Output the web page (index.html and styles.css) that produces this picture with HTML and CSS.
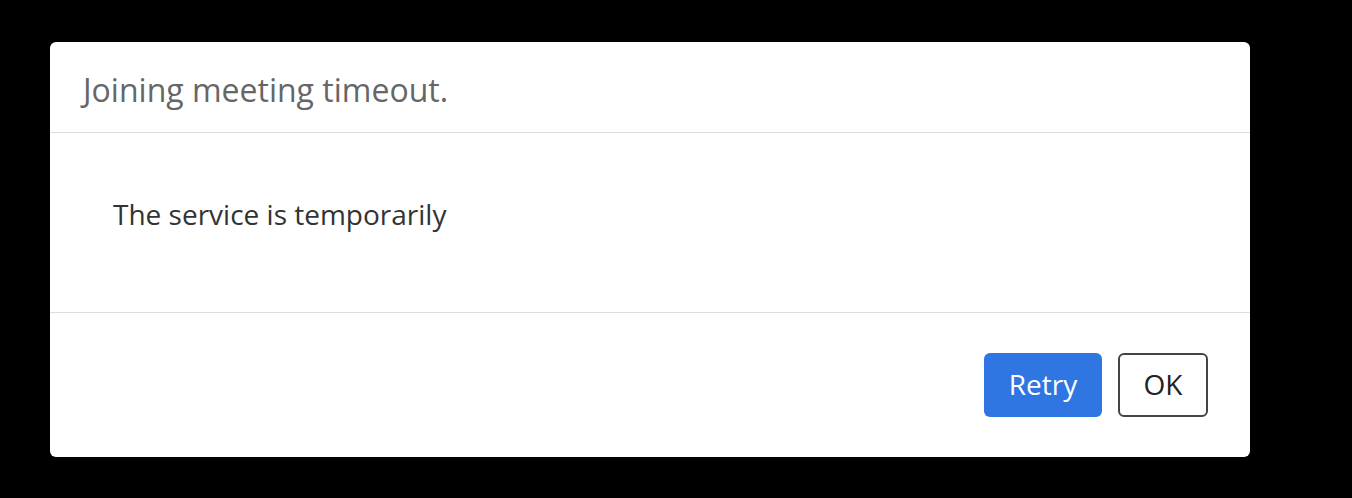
FILE: index.html
```html
<!DOCTYPE html>
<html lang="en">
<head>
    <meta charset="UTF-8">
    <title>Joining meeting timeout</title>
    <link rel="stylesheet" href="styles.css">
</head>
<body>
    <div class="dialog">
        <div class="dialog-header">Joining meeting timeout.</div>
        <div class="dialog-body">The service is temporarily</div>
        <div class="dialog-footer">
            <button class="btn btn-primary">Retry</button>
            <button class="btn btn-default">OK</button>
        </div>
    </div>
</body>
</html>
```

FILE: styles.css
```css
body { margin: 0; background: #000; font-family: "Open Sans", Arial, sans-serif; padding: 42px 0 0 50px; }
.dialog { width: 1200px; height: 415px; background: #fff; border-radius: 6px; display: flex; flex-direction: column; }
.dialog-header { height: 91px; display: flex; align-items: center; padding: 4px 0 0 33px; box-sizing: border-box; font-size: 32px; color: #666; border-bottom: 1px solid #dedede; }
.dialog-body { height: 180px; padding: 62px 0 0 63px; box-sizing: border-box; font-size: 28px; color: #333; border-bottom: 1px solid #dedede; }
.dialog-footer { flex: 1; display: flex; justify-content: flex-end; align-items: center; gap: 16px; padding-right: 42px; }
.btn { height: 64px; padding: 0 0 3px; border-radius: 6px; font-family: "Open Sans", Arial, sans-serif; font-size: 28px; cursor: pointer; }
.btn-primary { width: 118px; background: #2f76e3; border: none; color: #fff; }
.btn-default { width: 90px; background: #fff; border: 2px solid #444; color: #222; }
```
